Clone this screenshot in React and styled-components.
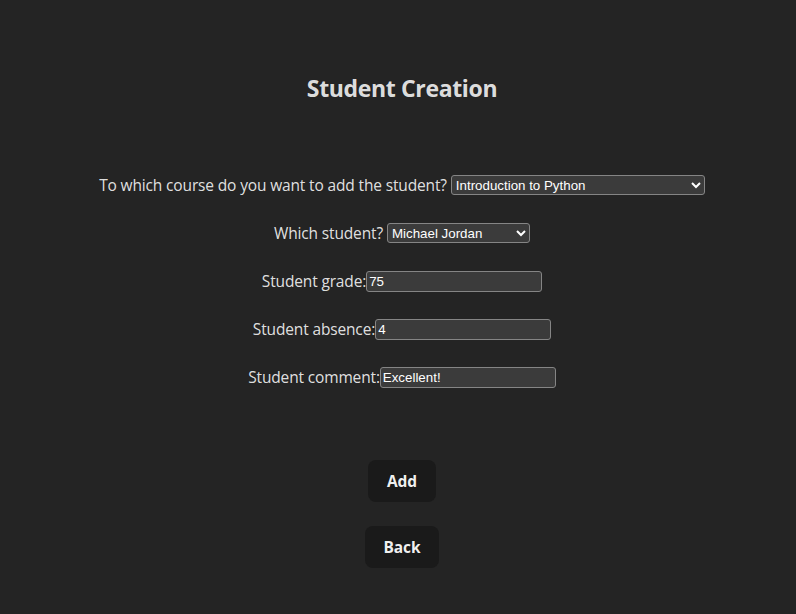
import React from "react";
import styled, { createGlobalStyle } from "styled-components";

const Global = createGlobalStyle`
  html, body { margin: 0; padding: 0; }
  body {
    background: #242424;
    color: rgba(255,255,255,0.87);
    font-family: "Open Sans", "Noto Sans", sans-serif;
    color-scheme: dark;
    min-height: 100vh;
  }
`;

const Page = styled.div`
  min-height: 614px;
  box-sizing: border-box;
  padding: 70px 0 0 8px;
  display: flex;
  flex-direction: column;
  align-items: center;
  text-align: center;
`;

const Title = styled.h2`
  margin: 0;
  font-size: 23px;
  letter-spacing: -0.35px;
  font-weight: 700;
  line-height: 36px;
`;

const Form = styled.form`
  margin-top: 68px;
  display: flex;
  flex-direction: column;
  align-items: center;
  gap: 26px;
`;

const Row = styled.div`
  display: flex;
  align-items: center;
  height: 22px;
  font-size: 15.5px;
  letter-spacing: -0.15px;
`;

const Label = styled.label`
  margin-right: ${(p) => (p.$gap ? "4px" : "0")};
`;

const fieldBase = `
  box-sizing: border-box;
  font-family: "Liberation Sans", Arial, sans-serif;
  font-size: 13.33px;
  letter-spacing: 0;
  color: #fff;
  background: #3b3b3b;
  border: 1px solid #858585;
  border-radius: 3px;
`;

const Select = styled.select`
  ${fieldBase}
  width: ${(p) => p.$w}px;
  height: 20px;
  padding: 0;
`;

const Input = styled.input`
  ${fieldBase}
  width: 176px;
  height: 21px;
  padding: 1px 2px;
`;

const Buttons = styled.div`
  margin-top: 72px;
  display: flex;
  flex-direction: column;
  align-items: center;
  gap: 24px;
`;

const Button = styled.button`
  box-sizing: border-box;
  height: 42px;
  padding: 0 18px;
  border-radius: 8px;
  border: 1px solid transparent;
  background: #1a1a1a;
  color: rgba(255,255,255,0.95);
  font-family: "Open Sans", "Noto Sans", sans-serif;
  font-size: 15.5px;
  letter-spacing: -0.15px;
  font-weight: 700;
  cursor: pointer;
`;

export default function App() {
  return (
    <>
      <Global />
      <Page>
        <Title>Student Creation</Title>
        <Form onSubmit={(e) => e.preventDefault()}>
          <Row>
            <Label $gap>To which course do you want to add the student?</Label>
            <Select $w={254} defaultValue="py">
              <option value="py">Introduction to Python</option>
            </Select>
          </Row>
          <Row>
            <Label $gap>Which student?</Label>
            <Select $w={143} defaultValue="mj">
              <option value="mj">Michael Jordan</option>
            </Select>
          </Row>
          <Row>
            <Label>Student grade:</Label>
            <Input defaultValue="75" />
          </Row>
          <Row>
            <Label>Student absence:</Label>
            <Input defaultValue="4" />
          </Row>
          <Row>
            <Label>Student comment:</Label>
            <Input defaultValue="Excellent!" />
          </Row>
        </Form>
        <Buttons>
          <Button>Add</Button>
          <Button>Back</Button>
        </Buttons>
      </Page>
    </>
  );
}
